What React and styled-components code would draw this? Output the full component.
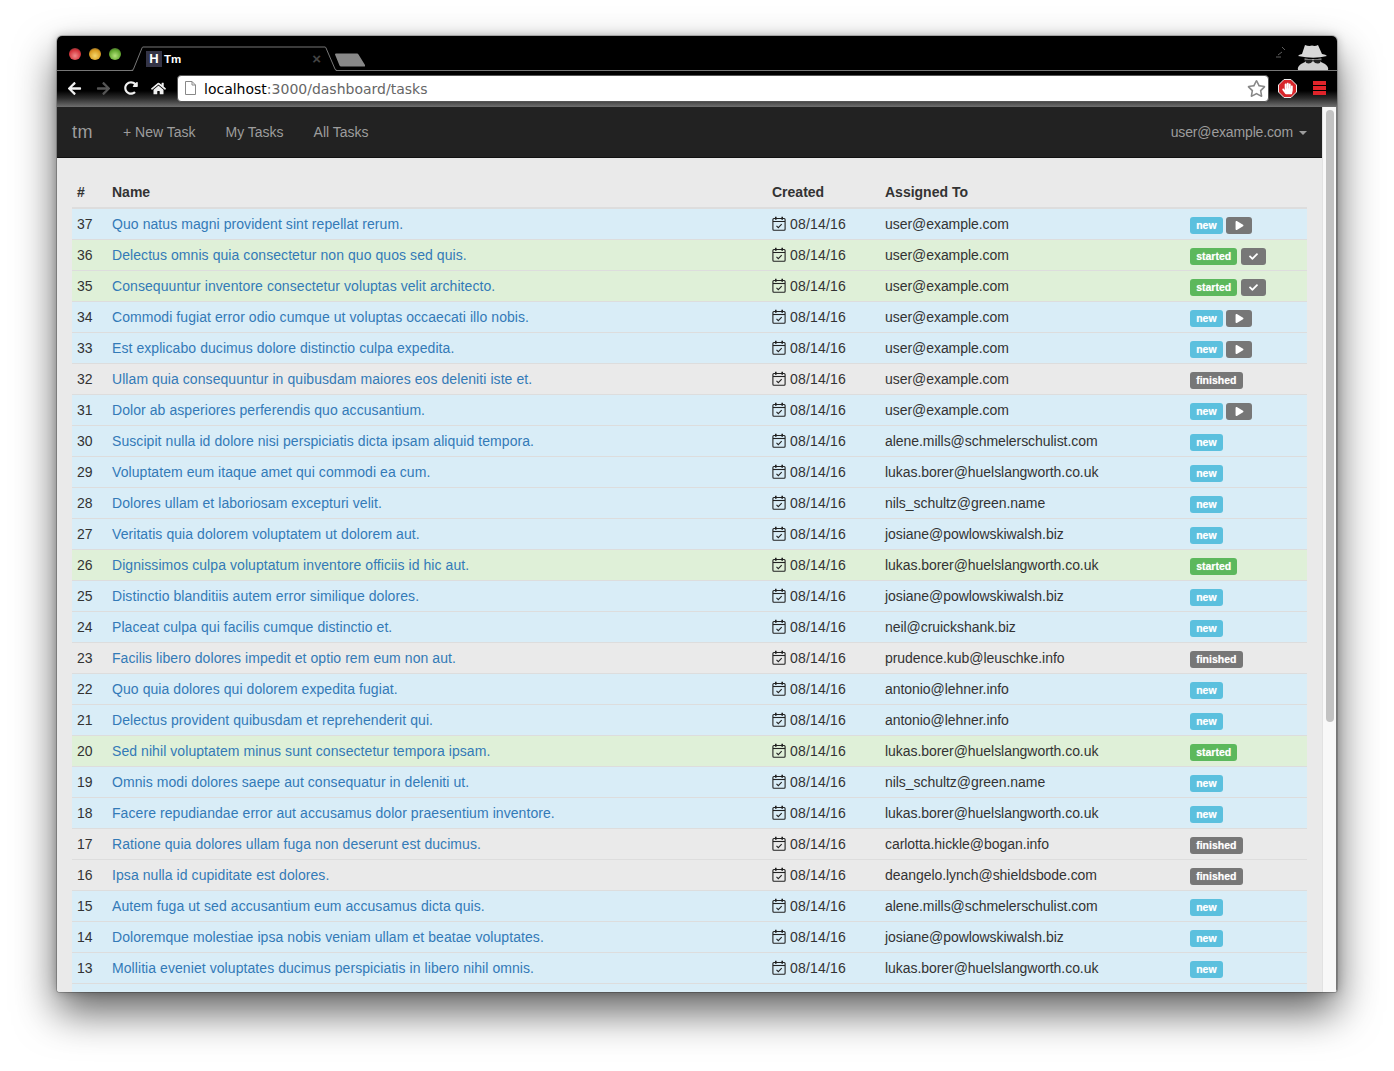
import styled, { createGlobalStyle } from "styled-components";
import { FaArrowLeft, FaArrowRight, FaRedoAlt, FaHome, FaRegStar, FaHandPaper, FaCheck, FaPlay } from "react-icons/fa";

const GlobalStyle = createGlobalStyle`
  html, body {
    margin: 0;
    padding: 0;
    background: #fff;
  }
  body {
    font-family: "Liberation Sans", Arial, sans-serif;
    font-size: 14px;
    line-height: 20px;
    color: #333;
  }
`;

const Page = styled.div`
  height: 1071px;
  padding: 36px 57px 0;
  box-sizing: border-box;
  overflow: hidden;
`;

const Window = styled.div`
  display: flex;
  flex-direction: column;
  height: 956px;
  border-radius: 5px 5px 3px 3px;
  overflow: hidden;
  box-shadow: 0 20px 42px rgba(0, 0, 0, 0.62), 0 0 10px rgba(0, 0, 0, 0.25), 0 0 0 1px rgba(0, 0, 0, 0.2);
`;

const TabStrip = styled.div`
  position: relative;
  display: flex;
  align-items: flex-start;
  flex: none;
  height: 35px;
  background: #000;
  border-bottom: 1px solid #777;
  box-sizing: border-box;
`;

const Lights = styled.div`
  display: flex;
  gap: 8px;
  width: 52px;
  padding: 12px 0 0 12px;
`;

const Light = styled.span`
  width: 12px;
  height: 12px;
  border-radius: 50%;
  background: radial-gradient(circle at 50% 65%, ${(p) => p.$light} 0%, ${(p) => p.$color} 60%, #333 100%);
`;

const TabOutline = styled.svg`
  position: absolute;
  left: 70px;
  top: 0;
`;

const Tab = styled.div`
  display: flex;
  align-items: center;
  position: relative;
  width: 176px;
  height: 16px;
  margin: 15px 0 0 25px;
  color: #fff;
  font-size: 11.5px;
  font-weight: bold;
`;

const Favicon = styled.span`
  display: flex;
  align-items: center;
  justify-content: center;
  width: 16px;
  height: 16px;
  margin-right: 2px;
  background: #343446;
  color: #fff;
  font-size: 13px;
  font-weight: bold;
`;

const TabClose = styled.span`
  margin-left: auto;
  margin-right: 1px;
  color: #444;
  font-size: 15px;
`;

const NewTab = styled.svg`
  position: relative;
  margin: 17px 0 0 13px;
`;

const Incognito = styled.svg`
  position: absolute;
  right: 8px;
  top: 8px;
`;

const Toolbar = styled.div`
  display: flex;
  align-items: center;
  flex: none;
  height: 36px;
  padding: 0 0 2px 9px;
  background: linear-gradient(#000 0, #000 55%, #2a2a2a 75%, #6f6f6f 100%);
  box-sizing: border-box;
`;

const NavIcon = styled.span`
  display: flex;
  justify-content: center;
  width: 16px;
  margin-right: ${(p) => p.$gap || 0}px;
  color: ${(p) => p.$color || "#f0f0f0"};
`;

const Omnibox = styled.div`
  display: flex;
  align-items: center;
  flex: 1;
  height: 27px;
  margin: 0 9px 0 11px;
  padding: 0 2px 0 7px;
  background: #fff;
  border: 1px solid #555;
  border-radius: 4px;
  box-sizing: border-box;
`;

const PageGlyph = styled.svg`
  margin-right: 8px;
`;

const Url = styled.div`
  flex: 1;
  padding-top: 1px;
  font-family: "DejaVu Sans", sans-serif;
  font-size: 14px;
  color: #666;
  span {
    color: #000;
  }
`;

const BlockBadge = styled.svg`
  margin-right: 16px;
`;

const MenuBars = styled.span`
  display: flex;
  flex-direction: column;
  gap: 1px;
  width: 13px;
  margin-right: 11px;
  span {
    height: 4px;
    background: #e0242a;
  }
`;

const Viewport = styled.div`
  display: flex;
  flex: 1;
  min-height: 0;
`;

const Main = styled.div`
  flex: 1;
  min-width: 0;
  background: #eaeaea;
  overflow: hidden;
`;

const Navbar = styled.nav`
  display: flex;
  height: 51px;
  background: #222;
  border-bottom: 1px solid #111;
  box-sizing: border-box;
  color: #9d9d9d;
`;

const Brand = styled.a`
  padding: 15px;
  font-size: 18px;
  letter-spacing: 0.5px;
`;

const NavLink = styled.a`
  padding: 15px;
`;

const UserMenu = styled.a`
  display: flex;
  align-items: flex-start;
  margin-left: auto;
  padding: 15px;
  letter-spacing: -0.15px;
`;

const Caret = styled.span`
  margin: 9px 0 0 6px;
  border-top: 4px solid #9d9d9d;
  border-left: 4px solid transparent;
  border-right: 4px solid transparent;
`;

const Content = styled.div`
  padding: 19px 15px 0;
`;

const Table = styled.table`
  width: 100%;
  table-layout: fixed;
  border-collapse: collapse;
`;

const Th = styled.th`
  width: ${(p) => p.$width}px;
  padding: 5px;
  box-sizing: border-box;
  text-align: left;
  border-bottom: 2px solid #ddd;
`;

const Row = styled.tr`
  background: ${(p) => (p.$status === "new" ? "#d9edf7" : p.$status === "started" ? "#dff0d8" : "transparent")};
  td {
    border-top: 1px solid #ddd;
  }
  &:first-child td {
    border-top: 0;
  }
`;

const Td = styled.td`
  padding: 5px;
  white-space: nowrap;
`;

const TaskLink = styled.a`
  color: #337ab7;
  letter-spacing: 0.07px;
`;

const DateCell = styled.span`
  display: flex;
  align-items: center;
  gap: 4px;
  letter-spacing: 0.2px;
  svg {
    margin-top: -1px;
  }
`;

const Email = styled.span`
  letter-spacing: -0.05px;
`;

const StatusCell = styled.div`
  display: flex;
  align-items: center;
  gap: 3.5px;
  height: 20px;
  padding-top: 3px;
  box-sizing: border-box;
`;

const Label = styled.span`
  display: inline-block;
  padding: 3px 6.2px 3.5px;
  border-radius: 3px;
  font-size: 10.5px;
  line-height: 10.5px;
  font-weight: bold;
  color: #fff;
  text-shadow: 0 0 1px rgba(255, 255, 255, 0.5);
  background: ${(p) => (p.$status === "new" ? "#5bc0de" : p.$status === "started" ? "#5cb85c" : "#777")};
`;

const ActionButton = styled.span`
  display: flex;
  align-items: center;
  justify-content: center;
  width: 25.5px;
  height: 17px;
  border-radius: 3px;
  background: #777;
  color: #fff;
`;

const Scrollbar = styled.div`
  width: 15px;
  flex: none;
  padding: 3px 2px 0 3px;
  background: #f8f8f8;
  border-left: 1px solid #e2e2e2;
  border-right: 1px solid #777;
  box-sizing: border-box;
`;

const Thumb = styled.div`
  height: 612px;
  background: #c2c2c2;
  border-radius: 4px;
`;

const emails = {
  u: "user@example.com",
  a: "alene.mills@schmelerschulist.com",
  l: "lukas.borer@huelslangworth.co.uk",
  n: "nils_schultz@green.name",
  j: "josiane@powlowskiwalsh.biz",
  c: "neil@cruickshank.biz",
  p: "prudence.kub@leuschke.info",
  o: "antonio@lehner.info",
  h: "carlotta.hickle@bogan.info",
  d: "deangelo.lynch@shieldsbode.com",
};

const tasks = [
  [37, "Quo natus magni provident sint repellat rerum.", "u", "new", "play"],
  [36, "Delectus omnis quia consectetur non quo quos sed quis.", "u", "started", "check"],
  [35, "Consequuntur inventore consectetur voluptas velit architecto.", "u", "started", "check"],
  [34, "Commodi fugiat error odio cumque ut voluptas occaecati illo nobis.", "u", "new", "play"],
  [33, "Est explicabo ducimus dolore distinctio culpa expedita.", "u", "new", "play"],
  [32, "Ullam quia consequuntur in quibusdam maiores eos deleniti iste et.", "u", "finished"],
  [31, "Dolor ab asperiores perferendis quo accusantium.", "u", "new", "play"],
  [30, "Suscipit nulla id dolore nisi perspiciatis dicta ipsam aliquid tempora.", "a", "new"],
  [29, "Voluptatem eum itaque amet qui commodi ea cum.", "l", "new"],
  [28, "Dolores ullam et laboriosam excepturi velit.", "n", "new"],
  [27, "Veritatis quia dolorem voluptatem ut dolorem aut.", "j", "new"],
  [26, "Dignissimos culpa voluptatum inventore officiis id hic aut.", "l", "started"],
  [25, "Distinctio blanditiis autem error similique dolores.", "j", "new"],
  [24, "Placeat culpa qui facilis cumque distinctio et.", "c", "new"],
  [23, "Facilis libero dolores impedit et optio rem eum non aut.", "p", "finished"],
  [22, "Quo quia dolores qui dolorem expedita fugiat.", "o", "new"],
  [21, "Delectus provident quibusdam et reprehenderit qui.", "o", "new"],
  [20, "Sed nihil voluptatem minus sunt consectetur tempora ipsam.", "l", "started"],
  [19, "Omnis modi dolores saepe aut consequatur in deleniti ut.", "n", "new"],
  [18, "Facere repudiandae error aut accusamus dolor praesentium inventore.", "l", "new"],
  [17, "Ratione quia dolores ullam fuga non deserunt est ducimus.", "h", "finished"],
  [16, "Ipsa nulla id cupiditate est dolores.", "d", "finished"],
  [15, "Autem fuga ut sed accusantium eum accusamus dicta quis.", "a", "new"],
  [14, "Doloremque molestiae ipsa nobis veniam ullam et beatae voluptates.", "j", "new"],
  [13, "Mollitia eveniet voluptates ducimus perspiciatis in libero nihil omnis.", "l", "new"],
];

const CalendarIcon = () => (
  <svg width="14" height="15" viewBox="0 0 14 15" fill="none" stroke="#222" strokeWidth="1.1">
    <rect x="0.9" y="2.5" width="12.2" height="11.7" rx="1" />
    <path d="M1 5.5h12" />
    <path d="M3.8 0.8v3M10.2 0.8v3" strokeWidth="1.6" />
    <path d="M4.5 9.8l1.8 1.8 3.4-3.4" />
  </svg>
);

const IncognitoIcon = () => (
  <Incognito width="54" height="27" viewBox="0 0 54 27">
    <path d="M1 13h5M3 11l4-3M7 3l3 3" stroke="#777" strokeWidth="0.8" fill="none" />
    <path d="M27 10L30 1q4 1.500 7 .5 3 1 6-.5l4 9q4 .5 5 2-13 3.500-29 0 1-1.500 4-2z" fill="#d8d8d8" />
    <path d="M23 26q-1-3 3-6 2-1 4-2 0-2-.5-3.500 8.500 1.500 17 0-.5 1.500-.5 3.500 2 1 4 2 4 3 3 6z" fill="#cfcfcf" />
    <path d="M30 15.500h6.500l1.500 1 1.500-1H46v1.500q-1 3-3.500 2.500-2.500 0-4.500-2.500-2 2.500-4.500 2.500-2.500 0-3.500-2.500z" fill="#222" />
  </Incognito>
);

const App = () => {
  return (
    <Page>
      <GlobalStyle />
      <Window>
        <TabStrip>
          <Lights>
            <Light $color="#d5333a" $light="#f08a8a" />
            <Light $color="#d99a1e" $light="#f5d66a" />
            <Light $color="#5fa52c" $light="#b2e27a" />
          </Lights>
          <TabOutline width="215" height="35" viewBox="0 0 215 35">
            <path d="M6 35l9-23.500q.3-.5 1-.5h181q.7 0 1 .5l11 23.500z" fill="#000" />
            <path d="M4 34.500q2 0 2.500-1.500l8.500-21q.3-1 1-1h182q.7 0 1 1l9 21q.5 1.500 2.500 1.500" fill="none" stroke="#777" />
          </TabOutline>
          <Tab>
            <Favicon>H</Favicon>
            Tm
            <TabClose>×</TabClose>
          </Tab>
          <NewTab width="30" height="14" viewBox="0 0 30 14">
            <path d="M0 1.500Q0 .5 1 .5h21q1 0 1.500 1L30 12q.5 1.500-1 1.500H6q-1 0-1.500-1z" fill="#888" />
          </NewTab>
          <IncognitoIcon />
        </TabStrip>
        <Toolbar>
          <NavIcon $gap={13}><FaArrowLeft size={15} /></NavIcon>
          <NavIcon $gap={12} $color="#555"><FaArrowRight size={15} /></NavIcon>
          <NavIcon $gap={11}><FaRedoAlt size={14} /></NavIcon>
          <NavIcon><FaHome size={15} /></NavIcon>
          <Omnibox>
            <PageGlyph width="11" height="14" viewBox="0 0 11 14" fill="#fff" stroke="#888">
              <path d="M.5.500h6.500l3.500 3.500v9.500H.5zM7 .5v3.500h3.500" />
            </PageGlyph>
            <Url><span>localhost</span>:3000/dashboard/tasks</Url>
            <FaRegStar size={19} color="#888" />
          </Omnibox>
          <BlockBadge width="19" height="19" viewBox="0 0 19 19">
            <path d="M6 .5h7L18.500 6v7L13 18.500H6L.5 13V6z" fill="#d8262b" stroke="#eee" />
            <FaHandPaper x="3.5" y="3.5" size={12} color="#fff" />
          </BlockBadge>
          <MenuBars><span /><span /><span /></MenuBars>
        </Toolbar>
        <Viewport>
          <Main>
            <Navbar>
              <Brand>tm</Brand>
              <NavLink>+ New Task</NavLink>
              <NavLink>My Tasks</NavLink>
              <NavLink>All Tasks</NavLink>
              <UserMenu>user@example.com<Caret /></UserMenu>
            </Navbar>
            <Content>
              <Table>
                <thead>
                  <tr>
                    <Th $width={35}>#</Th>
                    <Th $width={660}>Name</Th>
                    <Th $width={113}>Created</Th>
                    <Th $width={305}>Assigned To</Th>
                    <Th $width={122} />
                  </tr>
                </thead>
                <tbody>
                  {tasks.map(([id, name, email, status, action]) => (
                    <Row key={id} $status={status}>
                      <Td>{id}</Td>
                      <Td><TaskLink>{name}</TaskLink></Td>
                      <Td><DateCell><CalendarIcon />08/14/16</DateCell></Td>
                      <Td><Email>{emails[email]}</Email></Td>
                      <Td>
                        <StatusCell>
                          <Label $status={status}>{status}</Label>
                          {action && (
                            <ActionButton>
                              {action === "play" ? <FaPlay size={9} /> : <FaCheck size={9} />}
                            </ActionButton>
                          )}
                        </StatusCell>
                      </Td>
                    </Row>
                  ))}
                  <Row $status="new">
                    <Td>&nbsp;</Td>
                    <Td />
                    <Td />
                    <Td />
                    <Td />
                  </Row>
                </tbody>
              </Table>
            </Content>
          </Main>
          <Scrollbar>
            <Thumb />
          </Scrollbar>
        </Viewport>
      </Window>
    </Page>
  );
};

export default App;
